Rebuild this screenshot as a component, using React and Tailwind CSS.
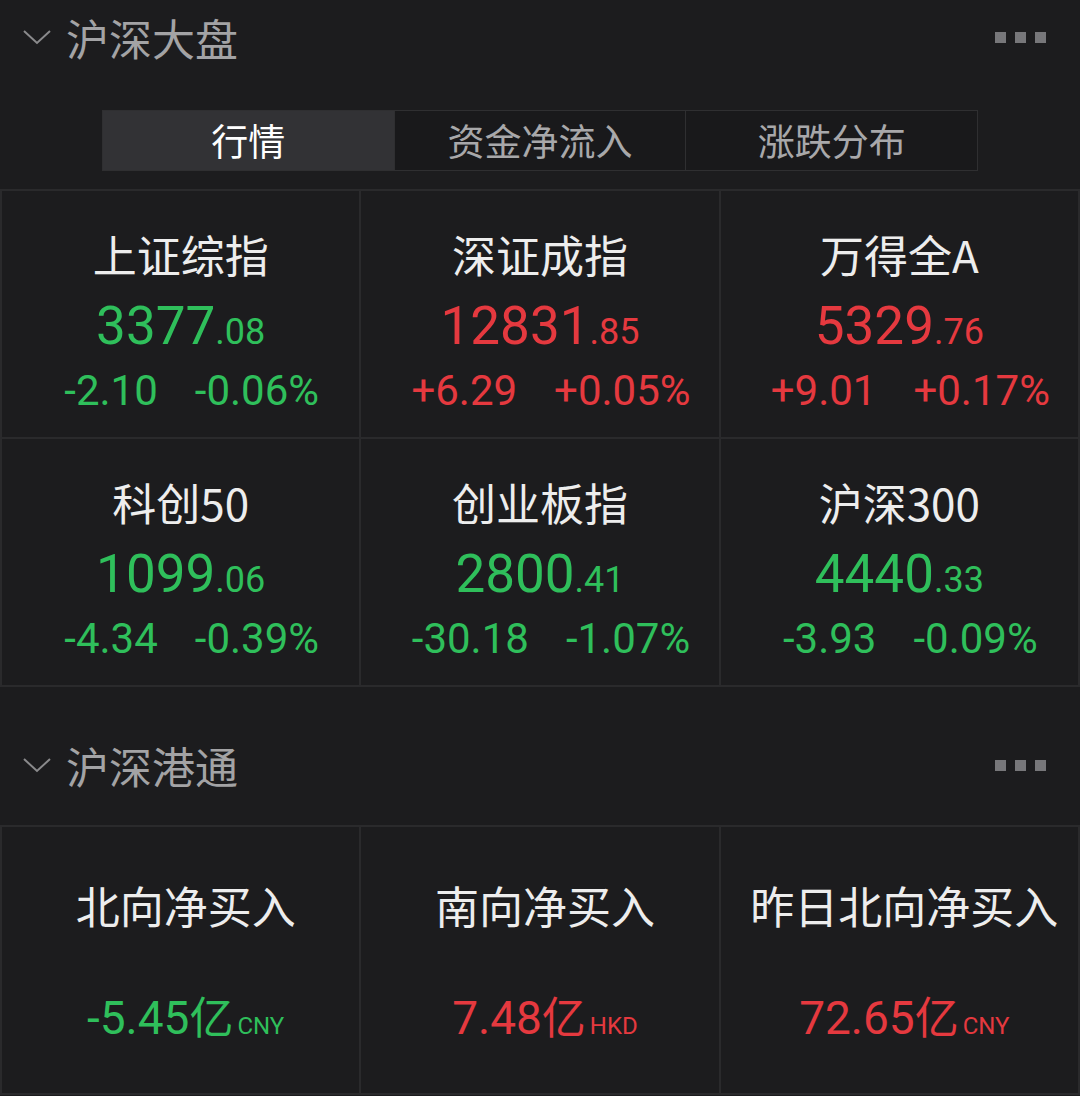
const GREEN = 'text-[#2fbf5b]'
const RED = 'text-[#e5393f]'

const indices = [
  { name: '上证综指', int: '3377', dec: '08', chg: '-2.10', pct: '-0.06%', up: false },
  { name: '深证成指', int: '12831', dec: '85', chg: '+6.29', pct: '+0.05%', up: true },
  { name: '万得全A', int: '5329', dec: '76', chg: '+9.01', pct: '+0.17%', up: true },
  { name: '科创50', int: '1099', dec: '06', chg: '-4.34', pct: '-0.39%', up: false },
  { name: '创业板指', int: '2800', dec: '41', chg: '-30.18', pct: '-1.07%', up: false },
  { name: '沪深300', int: '4440', dec: '33', chg: '-3.93', pct: '-0.09%', up: false },
]

const flows = [
  { name: '北向净买入', val: '-5.45', unit: 'CNY', up: false },
  { name: '南向净买入', val: '7.48', unit: 'HKD', up: true },
  { name: '昨日北向净买入', val: '72.65', unit: 'CNY', up: true },
]

const cjk = { fontFamily: '"Noto Sans CJK SC", sans-serif' }
const num = { fontFamily: 'Roboto, "Noto Sans CJK SC", sans-serif' }

function SectionHeader({ title }) {
  return (
    <div className="flex items-center justify-between h-full pl-[22px] pr-[34px]">
      <div className="flex items-center gap-[14px]">
        <svg width="30" height="18" viewBox="0 0 30 18" fill="none" stroke="#8a8a8c" strokeWidth="2">
          <path d="M2 3 L15 15 L28 3" />
        </svg>
        <span className="text-[43px] text-[#a3a3a5] leading-none" style={cjk}>{title}</span>
      </div>
      <div className="flex gap-[9px]">
        <span className="w-[11px] h-[11px] bg-[#77777a]" />
        <span className="w-[11px] h-[11px] bg-[#77777a]" />
        <span className="w-[11px] h-[11px] bg-[#77777a]" />
      </div>
    </div>
  )
}

export default function App() {
  const tabs = ['行情', '资金净流入', '涨跌分布']
  return (
    <div className="w-[1080px] h-[1096px] bg-[#1c1c1e] overflow-hidden">
      <div className="h-[74px]">
        <SectionHeader title="沪深大盘" />
      </div>

      <div className="flex justify-center pt-[36px] pb-[18px]">
        <div className="flex w-[876px] h-[61px] border border-[#2f2f31]">
          {tabs.map((t, i) => (
            <div
              key={t}
              className={`flex-1 flex items-center justify-center text-[37px] ${i === 0 ? 'bg-[#323235] text-white' : 'bg-[#19191b] text-[#a8a8aa]'} ${i > 0 ? 'border-l border-[#2f2f31]' : ''}`}
              style={cjk}
            >
              {t}
            </div>
          ))}
        </div>
      </div>

      <div className="grid grid-cols-3 border-t-2 border-l-2 border-[#2a2a2c]">
        {indices.map((d) => (
          <div key={d.name} className="h-[248px] border-r-2 border-b-2 border-[#2a2a2c] flex flex-col items-center pt-[36px]">
            <div className="text-[44px] text-[#ededed] leading-[54px]" style={cjk}>{d.name}</div>
            <div className={`leading-[48px] mt-[21px] ${d.up ? RED : GREEN}`} style={num}>
              <span className="text-[53px]">{d.int}</span>
              <span className="text-[36px]">.{d.dec}</span>
            </div>
            <div className={`flex gap-[37px] text-[42px] leading-[50px] mt-[3px] pl-[22px] ${d.up ? RED : GREEN}`} style={num}>
              <span>{d.chg}</span>
              <span>{d.pct}</span>
            </div>
          </div>
        ))}
      </div>

      <div className="h-[138px] pt-[46px]">
        <div className="h-[64px]">
          <SectionHeader title="沪深港通" />
        </div>
      </div>

      <div className="grid grid-cols-3 border-t-2 border-l-2 border-[#2a2a2c]">
        {flows.map((d) => (
          <div key={d.name} className="h-[268px] border-r-2 border-b-2 border-[#2a2a2c] flex flex-col items-center pt-[48px] pl-[10px]">
            <div className="text-[44px] text-[#ededed] leading-[60px]" style={cjk}>{d.name}</div>
            <div className={`flex items-baseline mt-[50px] ${d.up ? RED : GREEN}`}>
              <span className="text-[46px] leading-[60px]" style={num}>{d.val}</span>
              <span className="text-[44px] leading-[60px]" style={cjk}>亿</span>
              <span className="text-[24px] ml-[4px]" style={num}>{d.unit}</span>
            </div>
          </div>
        ))}
      </div>
    </div>
  )
}
